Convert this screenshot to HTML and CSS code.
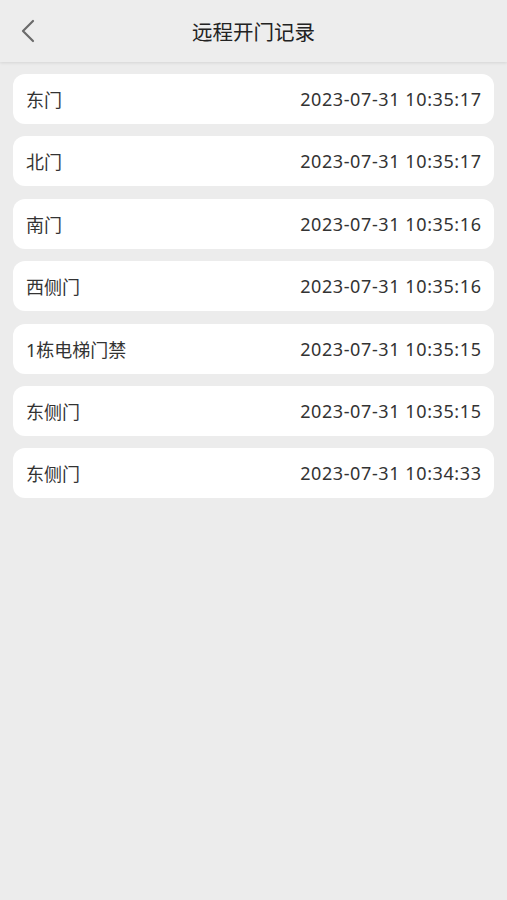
FILE: index.html
```html
<!DOCTYPE html>
<html lang="zh-CN">

<head>
    <meta charset="UTF-8">
    <meta name="viewport" content="width=device-width, initial-scale=1.0">
    <title>远程开门记录</title>
    <link rel="stylesheet" href="styles.css">
</head>

<body>
    <header class="nav-bar">
        <a class="back" href="#">
            <svg width="14" height="24" viewBox="0 0 14 24">
                <path d="M12 2 L2 12 L12 22" fill="none" stroke="#6b6b6b" stroke-width="2.2" stroke-linecap="round" stroke-linejoin="round" />
            </svg>
        </a>
        <h1>远程开门记录</h1>
    </header>
    <ul class="record-list">
        <li class="record"><span class="door">东门</span><span class="time">2023-07-31 10:35:17</span></li>
        <li class="record"><span class="door">北门</span><span class="time">2023-07-31 10:35:17</span></li>
        <li class="record"><span class="door">南门</span><span class="time">2023-07-31 10:35:16</span></li>
        <li class="record"><span class="door">西侧门</span><span class="time">2023-07-31 10:35:16</span></li>
        <li class="record"><span class="door">1栋电梯门禁</span><span class="time">2023-07-31 10:35:15</span></li>
        <li class="record"><span class="door">东侧门</span><span class="time">2023-07-31 10:35:15</span></li>
        <li class="record"><span class="door">东侧门</span><span class="time">2023-07-31 10:34:33</span></li>
    </ul>
</body>

</html>
```

FILE: styles.css
```css
* {
    box-sizing: border-box;
}

body {
    font-family: "Noto Sans", "Noto Sans CJK SC", sans-serif;
    margin: 0;
    padding: 0;
    background-color: #ececec;
    color: #333;
    min-height: 900px;
}

.nav-bar {
    height: 62px;
    background-color: #ededed;
    display: flex;
    align-items: center;
    justify-content: center;
    position: relative;
    box-shadow: 0 1px 3px rgba(0, 0, 0, 0.1);
}

.nav-bar h1 {
    margin: 0;
    font-size: 20.5px;
    font-weight: 400;
    color: #222;
}

.back {
    position: absolute;
    left: 21px;
    top: 19px;
    display: flex;
}

.record-list {
    list-style-type: none;
    margin: 0;
    padding: 12px 13px;
    display: flex;
    flex-direction: column;
    gap: 12.4px;
}

.record {
    height: 50px;
    background-color: #ffffff;
    border-radius: 12px;
    padding: 0 13px;
    display: flex;
    justify-content: space-between;
    align-items: center;
    font-size: 18px;
}

.door {
    color: #333;
}

.time {
    color: #333;
    letter-spacing: 0.6px;
    margin-right: -0.6px;
}
```
